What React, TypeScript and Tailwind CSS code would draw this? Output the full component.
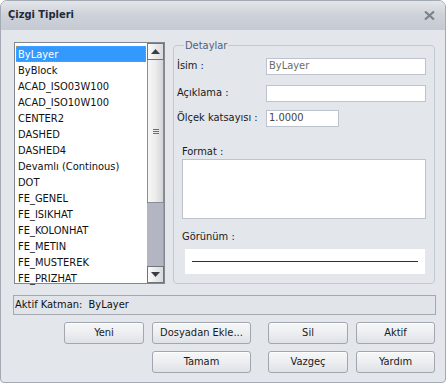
import type { ReactNode } from 'react';

const items = [
  'ByLayer',
  'ByBlock',
  'ACAD_ISO03W100',
  'ACAD_ISO10W100',
  'CENTER2',
  'DASHED',
  'DASHED4',
  'Devamlı (Continous)',
  'DOT',
  'FE_GENEL',
  'FE_ISIKHAT',
  'FE_KOLONHAT',
  'FE_METIN',
  'FE_MUSTEREK',
  'FE_PRIZHAT',
];

const font = 'font-["DejaVu_Sans_Condensed","Liberation_Sans",sans-serif]';

function Button({ children, className }: { children: ReactNode; className: string }) {
  return (
    <button
      className={`${className} block h-[22px] shrink-0 rounded-[3px] border border-[#a2a7af] bg-gradient-to-b from-[#f6f7f8] via-[#eceef1] to-[#dfe2e6] text-[11px] leading-[20px] text-[#1a1a1a] shadow-[inset_0_1px_0_#ffffff]`}
    >
      {children}
    </button>
  );
}

function ScrollArrow({ up }: { up?: boolean }) {
  return (
    <div className="grid h-[17px] shrink-0 place-items-center border border-[#70747c] bg-gradient-to-r from-[#fbfbfb] to-[#d9dadd]">
      <svg width="9" height="5" viewBox="0 0 9 5">
        <path d={up ? 'M0 5 L4.5 0 L9 5 Z' : 'M0 0 L4.5 5 L9 0 Z'} fill="#3a3d44" />
      </svg>
    </div>
  );
}

function Field({ label, value, inputW, mt }: { label: string; value?: string; inputW: string; mt: string }) {
  return (
    <div className={`flex items-center ${mt}`}>
      <span className="w-[89px] shrink-0 text-[11px] text-[#1a1a1a]">{label}</span>
      <div
        className={`${inputW} flex h-[17px] items-center border border-[#bcc3cf] bg-white px-[2px] text-[11px] text-[#6b6b6b]`}
      >
        {value}
      </div>
    </div>
  );
}

export default function App() {
  return (
    <div className={`${font} h-[385px] w-[447px] bg-white`}>
      <div className="flex h-[383px] w-[446px] flex-col overflow-hidden rounded-t-[7px] rounded-b-[4px] border border-[#a4aab3] bg-[#e3e6ea]">
        <div className="flex h-[29px] shrink-0 items-center justify-between bg-gradient-to-b from-[#e3e6ea] via-[#cdd1d8] to-[#c6cad2] pl-[7px] pr-[10px]">
          <span className="text-[11px] font-bold text-[#1f2a3a]">Çizgi Tipleri</span>
          <svg width="11" height="9" viewBox="0 0 11 9">
            <path d="M1 0.5 L10 8.5 M10 0.5 L1 8.5" stroke="#7a828e" strokeWidth="2.2" />
          </svg>
        </div>

        <div className="flex flex-1 flex-col pl-[12px] pr-[9px] pt-[9px]">
          <div className="flex items-start">
            {/* line type list */}
            <div className="ml-[1px] mt-[3px] flex h-[242px] w-[151px] shrink-0 border border-[#828790] bg-white">
              <div className="flex-1 p-[1px] pt-[3px]">
                {items.map((name, i) => (
                  <div
                    key={name}
                    className={
                      i === 0
                        ? 'h-[16px] border border-dotted border-[#d58a3a] bg-[#3399ff] pl-[1px] text-[11px] leading-[16px] text-white'
                        : 'h-[16px] pl-[2px] text-[11px] leading-[18px] text-[#111111]'
                    }
                  >
                    {name}
                  </div>
                ))}
              </div>
              <div className="flex w-[17px] shrink-0 flex-col">
                <ScrollArrow up />
                <div className="grid h-[143px] shrink-0 place-items-center border border-t-0 border-[#8a8d95] bg-gradient-to-r from-[#f7f7f7] via-[#ececec] to-[#d4d5d8]">
                  <div className="flex flex-col gap-[1px]">
                    <div className="h-[1px] w-[6px] bg-[#6a6d74]" />
                    <div className="h-[1px] w-[6px] bg-[#6a6d74]" />
                    <div className="h-[1px] w-[6px] bg-[#6a6d74]" />
                  </div>
                </div>
                <div className="flex-1 border-r border-[#9a9dab] bg-[#b3b5c2]" />
                <ScrollArrow />
              </div>
            </div>

            {/* details group */}
            <fieldset className="ml-[8px] h-[245px] w-[262px] rounded-[4px] border border-[#c4c9d1] pb-0 pl-[3px] pr-[7px]">
              <legend className="ml-[7px] px-[1px] text-[11px] leading-[13px] text-[#51607f]">Detaylar</legend>
              <Field label="İsim :" value="ByLayer" inputW="w-[160px]" mt="mt-[6px]" />
              <Field label="Açıklama :" inputW="w-[160px]" mt="mt-[10px]" />
              <Field label="Ölçek katsayısı :" value="1.0000" inputW="w-[73px] text-[#444444]" mt="mt-[8px]" />
              <div className="ml-[5px] mt-[18px] text-[11px] leading-[13px] text-[#1a1a1a]">Format :</div>
              <div className="ml-[5px] mt-[1px] h-[60px] w-[244px] border border-[#bcc3cf] bg-white" />
              <div className="ml-[5px] mt-[11px] text-[11px] leading-[13px] text-[#1a1a1a]">Görünüm :</div>
              <div className="ml-[8px] mt-[6px] flex h-[25px] w-[240px] items-center bg-white px-[7px]">
                <div className="h-[1px] w-full bg-[#3c2a2a]" />
              </div>
            </fieldset>
          </div>

          <div className="mt-[11px] flex h-[20px] items-center border border-[#a4a8af] bg-[#e1e4e8] pl-[1px] text-[11px] text-[#111111]">
            Aktif Katman:&nbsp;&nbsp;ByLayer
          </div>

          <div className="mt-[7px] flex justify-end pr-[1px]">
            <Button className="w-[80px]">Yeni</Button>
            <Button className="ml-[8px] w-[99px]">Dosyadan Ekle...</Button>
            <Button className="ml-[17px] w-[80px]">Sil</Button>
            <Button className="ml-[8px] w-[79px]">Aktif</Button>
          </div>
          <div className="mt-[7px] flex justify-end pr-[1px]">
            <Button className="w-[99px]">Tamam</Button>
            <Button className="ml-[17px] w-[80px]">Vazgeç</Button>
            <Button className="ml-[8px] w-[79px]">Yardım</Button>
          </div>
        </div>
      </div>
    </div>
  );
}
